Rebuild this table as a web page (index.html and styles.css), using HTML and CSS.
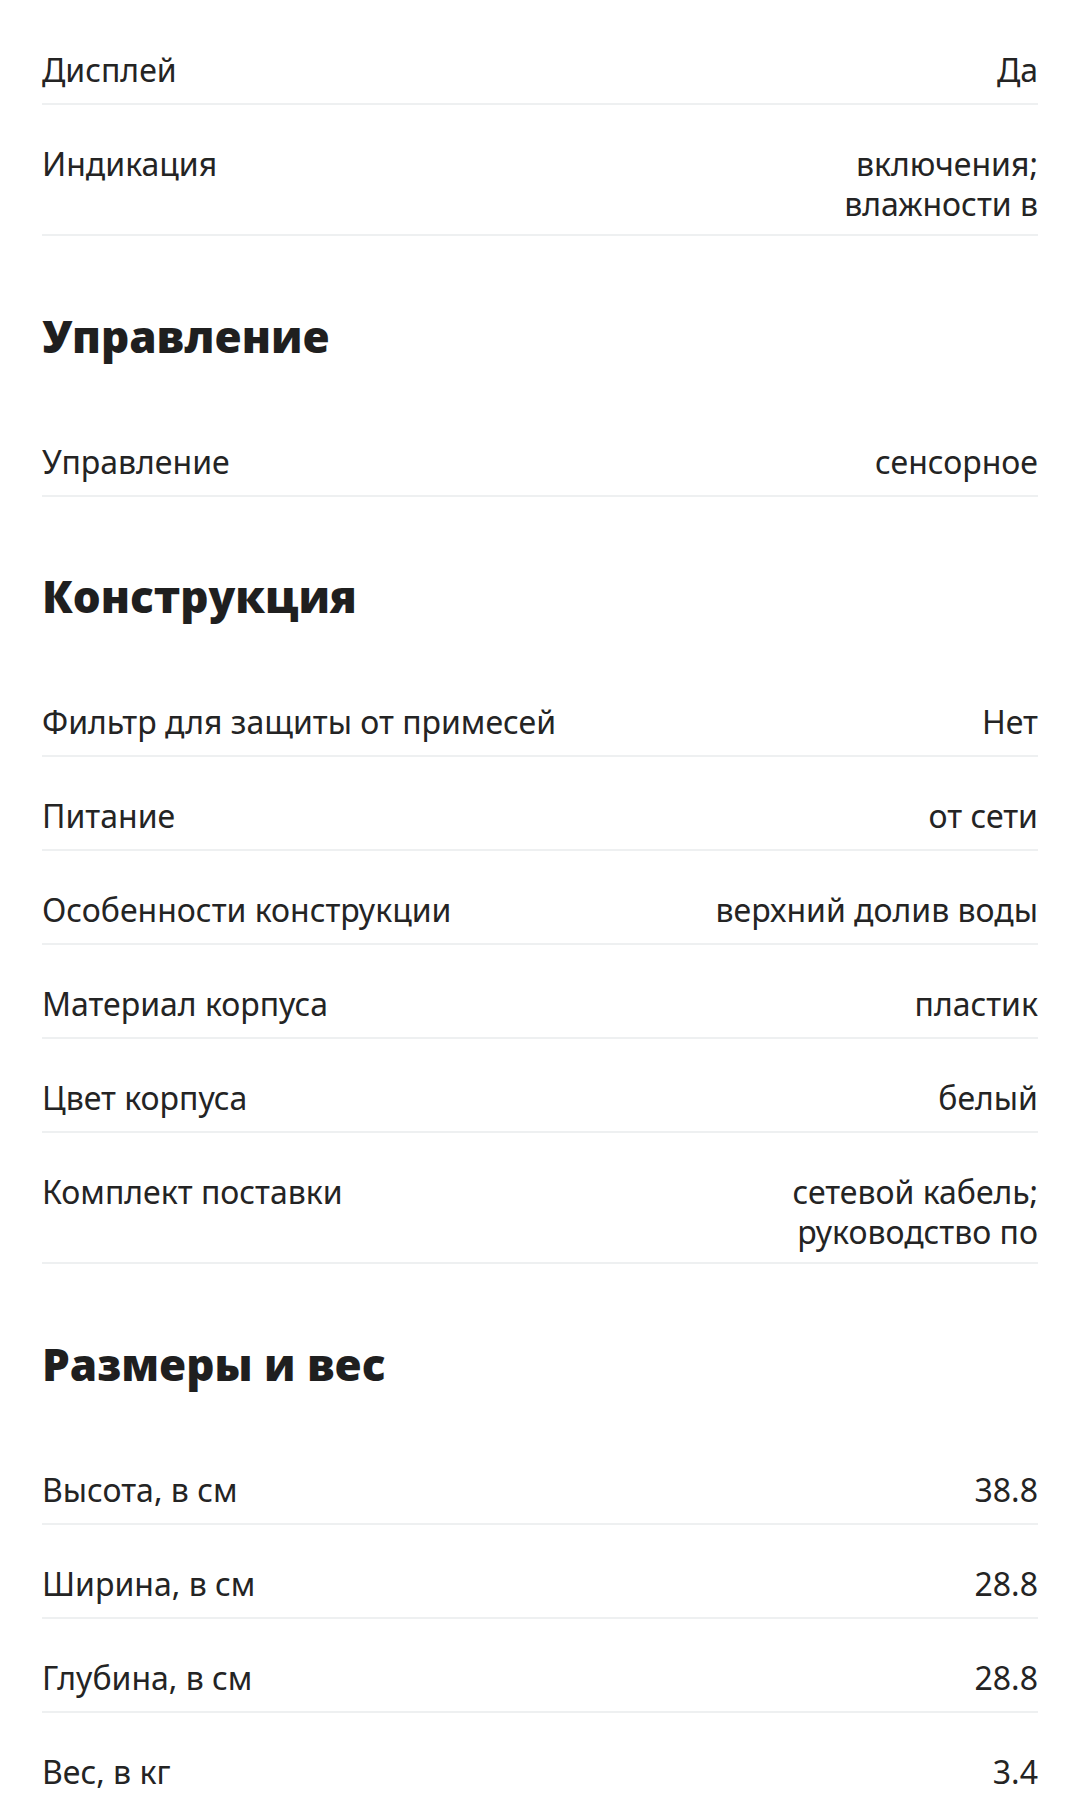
FILE: index.html
```html
<!DOCTYPE html>
<html lang="ru">
<head>
    <meta charset="UTF-8">
    <meta name="viewport" content="width=device-width, initial-scale=1.0">
    <title>Характеристики</title>
    <link rel="stylesheet" href="styles.css">
</head>
<body>

    <!-- Характеристики товара -->
    <div class="specs">
        <div class="spec-row">
            <div class="spec-name">Дисплей</div>
            <div class="spec-value">Да</div>
        </div>
        <div class="spec-row">
            <div class="spec-name">Индикация</div>
            <div class="spec-value">включения;<br>влажности в</div>
        </div>

        <h2 class="spec-title">Управление</h2>
        <div class="spec-row">
            <div class="spec-name">Управление</div>
            <div class="spec-value">сенсорное</div>
        </div>

        <h2 class="spec-title">Конструкция</h2>
        <div class="spec-row">
            <div class="spec-name">Фильтр для защиты от примесей</div>
            <div class="spec-value">Нет</div>
        </div>
        <div class="spec-row">
            <div class="spec-name">Питание</div>
            <div class="spec-value">от сети</div>
        </div>
        <div class="spec-row">
            <div class="spec-name">Особенности конструкции</div>
            <div class="spec-value">верхний долив воды</div>
        </div>
        <div class="spec-row">
            <div class="spec-name">Материал корпуса</div>
            <div class="spec-value">пластик</div>
        </div>
        <div class="spec-row">
            <div class="spec-name">Цвет корпуса</div>
            <div class="spec-value">белый</div>
        </div>
        <div class="spec-row">
            <div class="spec-name">Комплект поставки</div>
            <div class="spec-value">сетевой кабель;<br>руководство по</div>
        </div>

        <h2 class="spec-title">Размеры и вес</h2>
        <div class="spec-row">
            <div class="spec-name">Высота, в см</div>
            <div class="spec-value">38.8</div>
        </div>
        <div class="spec-row">
            <div class="spec-name">Ширина, в см</div>
            <div class="spec-value">28.8</div>
        </div>
        <div class="spec-row">
            <div class="spec-name">Глубина, в см</div>
            <div class="spec-value">28.8</div>
        </div>
        <div class="spec-row">
            <div class="spec-name">Вес, в кг</div>
            <div class="spec-value">3.4</div>
        </div>
    </div>

</body>
</html>
```

FILE: styles.css
```css
/* Базовые стили */
body {
    margin: 0;
    padding: 0;
    background-color: #fff;
    color: #242424;
    font-family: "Noto Sans", "Open Sans", sans-serif;
}

.specs {
    padding: 11px 42px 0;
}

/* Строка характеристики */
.spec-row {
    display: flex;
    justify-content: space-between;
    align-items: flex-start;
    gap: 40px;
    box-sizing: border-box;
    min-height: 94px;
    padding: 39px 0 10px;
    border-bottom: 2px solid #eef0f1;
    font-size: 32px;
    line-height: 40px;
}

.spec-value {
    text-align: right;
}

/* Заголовки разделов */
.spec-title {
    margin: 0;
    padding: 73.5px 0 41px;
    font-family: "Open Sans", "Noto Sans", sans-serif;
    font-weight: 800;
    font-size: 44px;
    line-height: 52px;
    color: #1f1f1f;
}
```
